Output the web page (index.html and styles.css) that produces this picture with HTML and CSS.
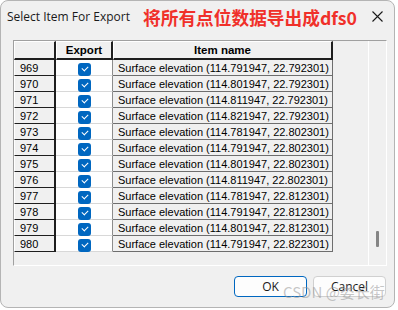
FILE: index.html
```html
<!DOCTYPE html>
<html>
<head>
<meta charset="utf-8">
<link rel="stylesheet" href="styles.css">
</head>
<body>
<div class="window">
  <div class="titlebar">
    <span class="title">Select Item For Export</span>
    <span class="note">将所有点位数据导出成dfs0</span>
    <span class="close">
      <svg width="11" height="11" viewBox="0 0 11 11"><path d="M0.5 0.5 L10.5 10.5 M10.5 0.5 L0.5 10.5" stroke="#1a1a1a" stroke-width="1.1" fill="none"/></svg>
    </span>
  </div>
  <div class="frame">
    <div class="grid">
      <div class="hcell corner"></div>
      <div class="hcell">Export</div>
      <div class="hcell">Item name</div>

      <div class="rh">969</div><div class="ck"><span class="box"></span></div><div class="nm">Surface elevation (114.791947, 22.792301)</div>
      <div class="rh">970</div><div class="ck"><span class="box"></span></div><div class="nm">Surface elevation (114.801947, 22.792301)</div>
      <div class="rh">971</div><div class="ck"><span class="box"></span></div><div class="nm">Surface elevation (114.811947, 22.792301)</div>
      <div class="rh">972</div><div class="ck"><span class="box"></span></div><div class="nm">Surface elevation (114.821947, 22.792301)</div>
      <div class="rh">973</div><div class="ck"><span class="box"></span></div><div class="nm">Surface elevation (114.781947, 22.802301)</div>
      <div class="rh">974</div><div class="ck"><span class="box"></span></div><div class="nm">Surface elevation (114.791947, 22.802301)</div>
      <div class="rh">975</div><div class="ck"><span class="box"></span></div><div class="nm">Surface elevation (114.801947, 22.802301)</div>
      <div class="rh">976</div><div class="ck"><span class="box"></span></div><div class="nm">Surface elevation (114.811947, 22.802301)</div>
      <div class="rh">977</div><div class="ck"><span class="box"></span></div><div class="nm">Surface elevation (114.781947, 22.812301)</div>
      <div class="rh">978</div><div class="ck"><span class="box"></span></div><div class="nm">Surface elevation (114.791947, 22.812301)</div>
      <div class="rh">979</div><div class="ck"><span class="box"></span></div><div class="nm">Surface elevation (114.801947, 22.812301)</div>
      <div class="rh">980</div><div class="ck"><span class="box"></span></div><div class="nm">Surface elevation (114.791947, 22.822301)</div>
    </div>
    <div class="spacer"></div>
    <div class="scroll"><span class="thumb"></span></div>
  </div>
  <div class="buttons">
    <button class="btn ok">OK</button>
    <button class="btn">Cancel</button>
  </div>
  <span class="watermark">CSDN @娄长街</span>
</div>
</body>
</html>
```
FILE: styles.css
```css
html, body {
  margin: 0;
  padding: 0;
  background: #ffffff;
}
body {
  font-family: "Liberation Sans", Arial, sans-serif;
}
.window {
  position: relative;
  box-sizing: border-box;
  width: 395px;
  height: 308px;
  background: #f0f0f0;
  border: 1px solid #b4b4b4;
  border-radius: 8px;
  overflow: hidden;
}
.titlebar {
  display: flex;
  align-items: center;
  height: 30px;
  padding-left: 6px;
}
.title {
  flex-shrink: 0;
  font-family: "Open Sans", "Liberation Sans", sans-serif;
  font-size: 12px;
  color: #1a1a1a;
  width: 136px;
  white-space: nowrap;
}
.note {
  flex-shrink: 0;
  white-space: nowrap;
  font-family: "Noto Sans CJK SC", "Noto Sans", sans-serif;
  font-weight: bold;
  font-size: 17.7px;
  line-height: 22px;
  color: #f0302a;
  margin-top: 2px;
}
.close {
  margin-left: auto;
  margin-right: 11px;
  display: flex;
}
.frame {
  display: flex;
  box-sizing: border-box;
  margin: 9px 0 0 12px;
  width: 374px;
  height: 226px;
  border-top: 1px solid #a0a0a0;
  border-left: 1px solid #a0a0a0;
  border-right: 1px solid #ffffff;
  border-bottom: 1px solid #ffffff;
}
.grid {
  display: grid;
  grid-template-columns: 42px 57px 220px;
  grid-template-rows: 19px repeat(12, 16px);
  align-self: flex-start;
  font-size: 11px;
  color: #000;
}
.hcell {
  box-sizing: border-box;
  background: #f0f0f0;
  border-right: 2px solid #1e1e1e;
  border-bottom: 2px solid #1e1e1e;
  border-top: 1px solid #ffffff;
  border-left: 1px solid #ffffff;
  font-weight: bold;
  font-size: 11.5px;
  display: flex;
  align-items: center;
  justify-content: center;
}
.rh {
  box-sizing: border-box;
  background: #f0f0f0;
  border-right: 2px solid #1e1e1e;
  border-bottom: 1px solid #1e1e1e;
  border-left: 1px solid #ffffff;
  padding-left: 5px;
  display: flex;
  align-items: center;
}
.ck {
  box-sizing: border-box;
  background: #ffffff;
  border-right: 1px solid #8c8c8c;
  border-bottom: 1px solid #d8d8d8;
  display: flex;
  justify-content: center;
  align-items: flex-end;
}
.box {
  position: relative;
  width: 13px;
  height: 13px;
  margin-bottom: -1px;
  margin-left: 1px;
  border-radius: 3px;
  background: #0067c0;
}
.box::after {
  content: "";
  position: absolute;
  left: 4px;
  top: 3px;
  width: 5px;
  height: 3px;
  border-left: 1px solid #fff;
  border-bottom: 1px solid #fff;
  transform: rotate(-45deg);
}
.nm {
  box-sizing: border-box;
  background: #f0f0f0;
  border-right: 1px solid #6e6e6e;
  border-bottom: 1px solid #6e6e6e;
  padding-left: 5px;
  display: flex;
  align-items: center;
  white-space: nowrap;
}
.spacer {
  flex: 1;
}
.scroll {
  position: relative;
  width: 17px;
  border-left: 1px solid #ffffff;
}
.thumb {
  position: absolute;
  left: 7px;
  top: 190px;
  width: 3px;
  height: 16px;
  border-radius: 1px;
  background: #858585;
}
.buttons {
  display: flex;
  justify-content: flex-end;
  gap: 6px;
  margin-top: 10px;
  padding-right: 8px;
}
.btn {
  box-sizing: border-box;
  width: 73px;
  height: 21px;
  padding: 0;
  background: #fdfdfd;
  border: 1px solid #d0d0d0;
  border-radius: 4px;
  font-family: "Open Sans", "Liberation Sans", sans-serif;
  font-size: 12px;
  color: #1a1a1a;
}
.btn.ok {
  border: 1.5px solid #0067c0;
}
.watermark {
  position: absolute;
  left: 282px;
  top: 280px;
  font-family: "Noto Sans CJK SC", "Liberation Sans", sans-serif;
  font-size: 15px;
  color: rgba(150, 150, 150, 0.55);
  white-space: nowrap;
}
```
